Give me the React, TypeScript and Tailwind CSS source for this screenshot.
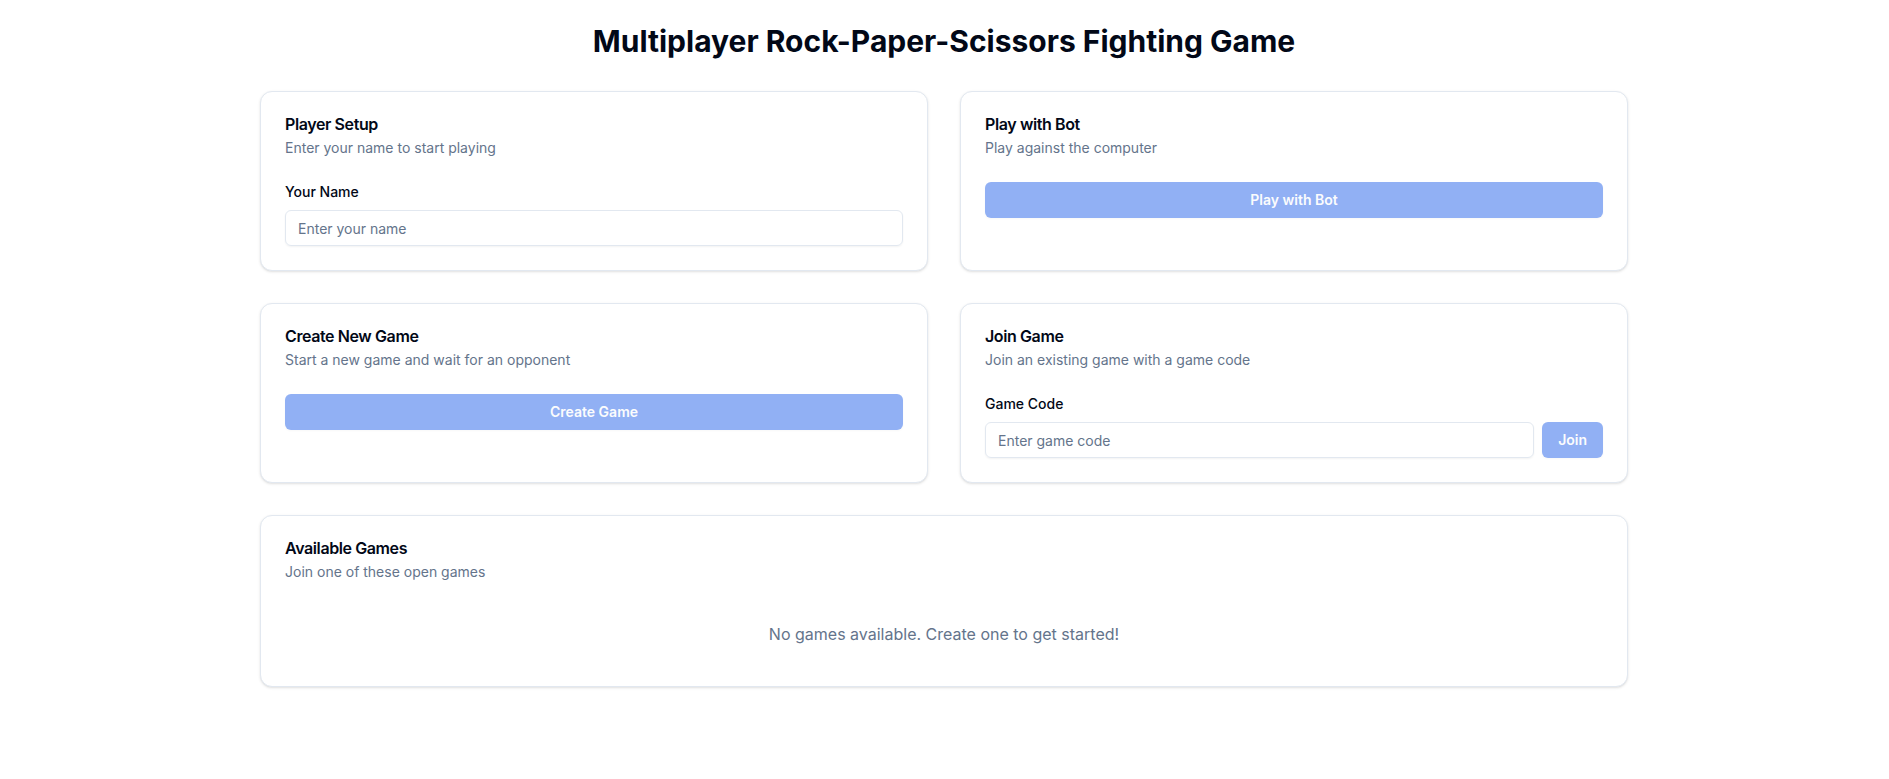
import React from "react";

function Card({ title, description, children }: { title: string; description: string; children: React.ReactNode }) {
  return (
    <section className="rounded-xl border border-[#e2e8f0] bg-white shadow">
      <header className="flex flex-col gap-1.5 p-6">
        <h2 className="text-base font-semibold leading-4 tracking-tight">{title}</h2>
        <p className="text-sm text-[#64748b]">{description}</p>
      </header>
      <div className="px-6 pb-6">{children}</div>
    </section>
  );
}

const button =
  "inline-flex h-9 items-center justify-center rounded-md bg-[#2563eb] px-4 text-sm font-semibold text-[#f8fafc] shadow-xs disabled:opacity-50";
const input =
  "h-9 w-full min-w-0 rounded-md border border-[#e2e8f0] bg-transparent px-3 py-1 text-sm shadow-xs outline-none placeholder:text-[#64748b]";

export default function App() {
  return (
    <div className="pr-px font-['Inter',sans-serif] text-[#020817]">
      <main className="mx-auto max-w-[1400px] px-4 pt-[23px] pb-6">
        <h1 className="mb-8 text-center text-3xl font-bold">Multiplayer Rock-Paper-Scissors Fighting Game</h1>
        <div className="grid gap-8 md:grid-cols-2">
          <Card title="Player Setup" description="Enter your name to start playing">
            <div className="flex flex-col gap-2">
              <label htmlFor="name" className="text-sm font-medium">Your Name</label>
              <input id="name" className={input} placeholder="Enter your name" />
            </div>
          </Card>
          <Card title="Play with Bot" description="Play against the computer">
            <button disabled className={`${button} w-full`}>Play with Bot</button>
          </Card>
          <Card title="Create New Game" description="Start a new game and wait for an opponent">
            <button disabled className={`${button} w-full`}>Create Game</button>
          </Card>
          <Card title="Join Game" description="Join an existing game with a game code">
            <div className="flex flex-col gap-2">
              <label htmlFor="code" className="text-sm font-medium">Game Code</label>
              <div className="flex gap-2">
                <input id="code" className={input} placeholder="Enter game code" />
                <button disabled className={button}>Join</button>
              </div>
            </div>
          </Card>
          <div className="md:col-span-2">
            <Card title="Available Games" description="Join one of these open games">
              <p className="py-4 text-center text-[#64748b]">No games available. Create one to get started!</p>
            </Card>
          </div>
        </div>
      </main>
    </div>
  );
}
